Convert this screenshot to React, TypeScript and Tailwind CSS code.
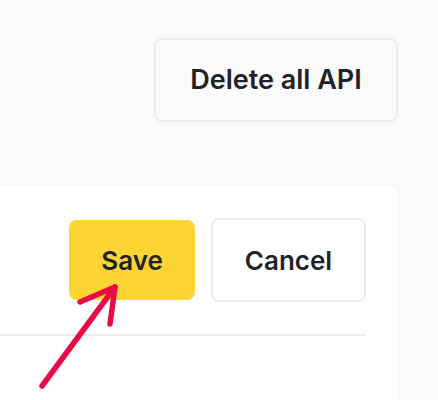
export default function App() {
  return (
    <div
      className="relative w-[438px] h-[400px] overflow-hidden bg-[#fafafa]"
      style={{ fontFamily: "Inter, 'Noto Sans', sans-serif" }}
    >
      <div className="flex justify-end pt-[38px] pr-[40px]">
        <button className="w-[244px] h-[84px] rounded-[8px] border-2 border-[#eaecef] bg-[#fafafa] text-[27px] font-semibold text-[#1e2329]">
          Delete all API
        </button>
      </div>
      <div className="mt-[64px] mr-[40px] h-[300px] rounded-tr-[10px] bg-white shadow-[0_0_4px_rgba(0,0,0,0.04)]">
        <div className="flex items-center justify-end gap-[16px] pt-[32px] pr-[32px]">
          <button className="w-[126px] h-[80px] rounded-[8px] bg-[#fcd535] text-[26px] font-semibold text-[#1e2329]">
            Save
          </button>
          <button className="w-[155px] h-[84px] rounded-[8px] border-2 border-[#eaecef] bg-white text-[26px] font-semibold text-[#1e2329]">
            Cancel
          </button>
        </div>
        <div className="mt-[32px] mr-[32px] h-[2px] bg-[#eaecef]" />
      </div>
      <svg
        className="absolute left-0 top-0"
        width="438"
        height="400"
        viewBox="0 0 438 400"
      >
        <g
          stroke="#ea0a45"
          strokeWidth="5.5"
          strokeLinecap="round"
          strokeLinejoin="round"
          fill="none"
        >
          <path d="M42 386 L115 287" />
          <path d="M80 302 L115 287 L110 324" />
        </g>
      </svg>
    </div>
  );
}
